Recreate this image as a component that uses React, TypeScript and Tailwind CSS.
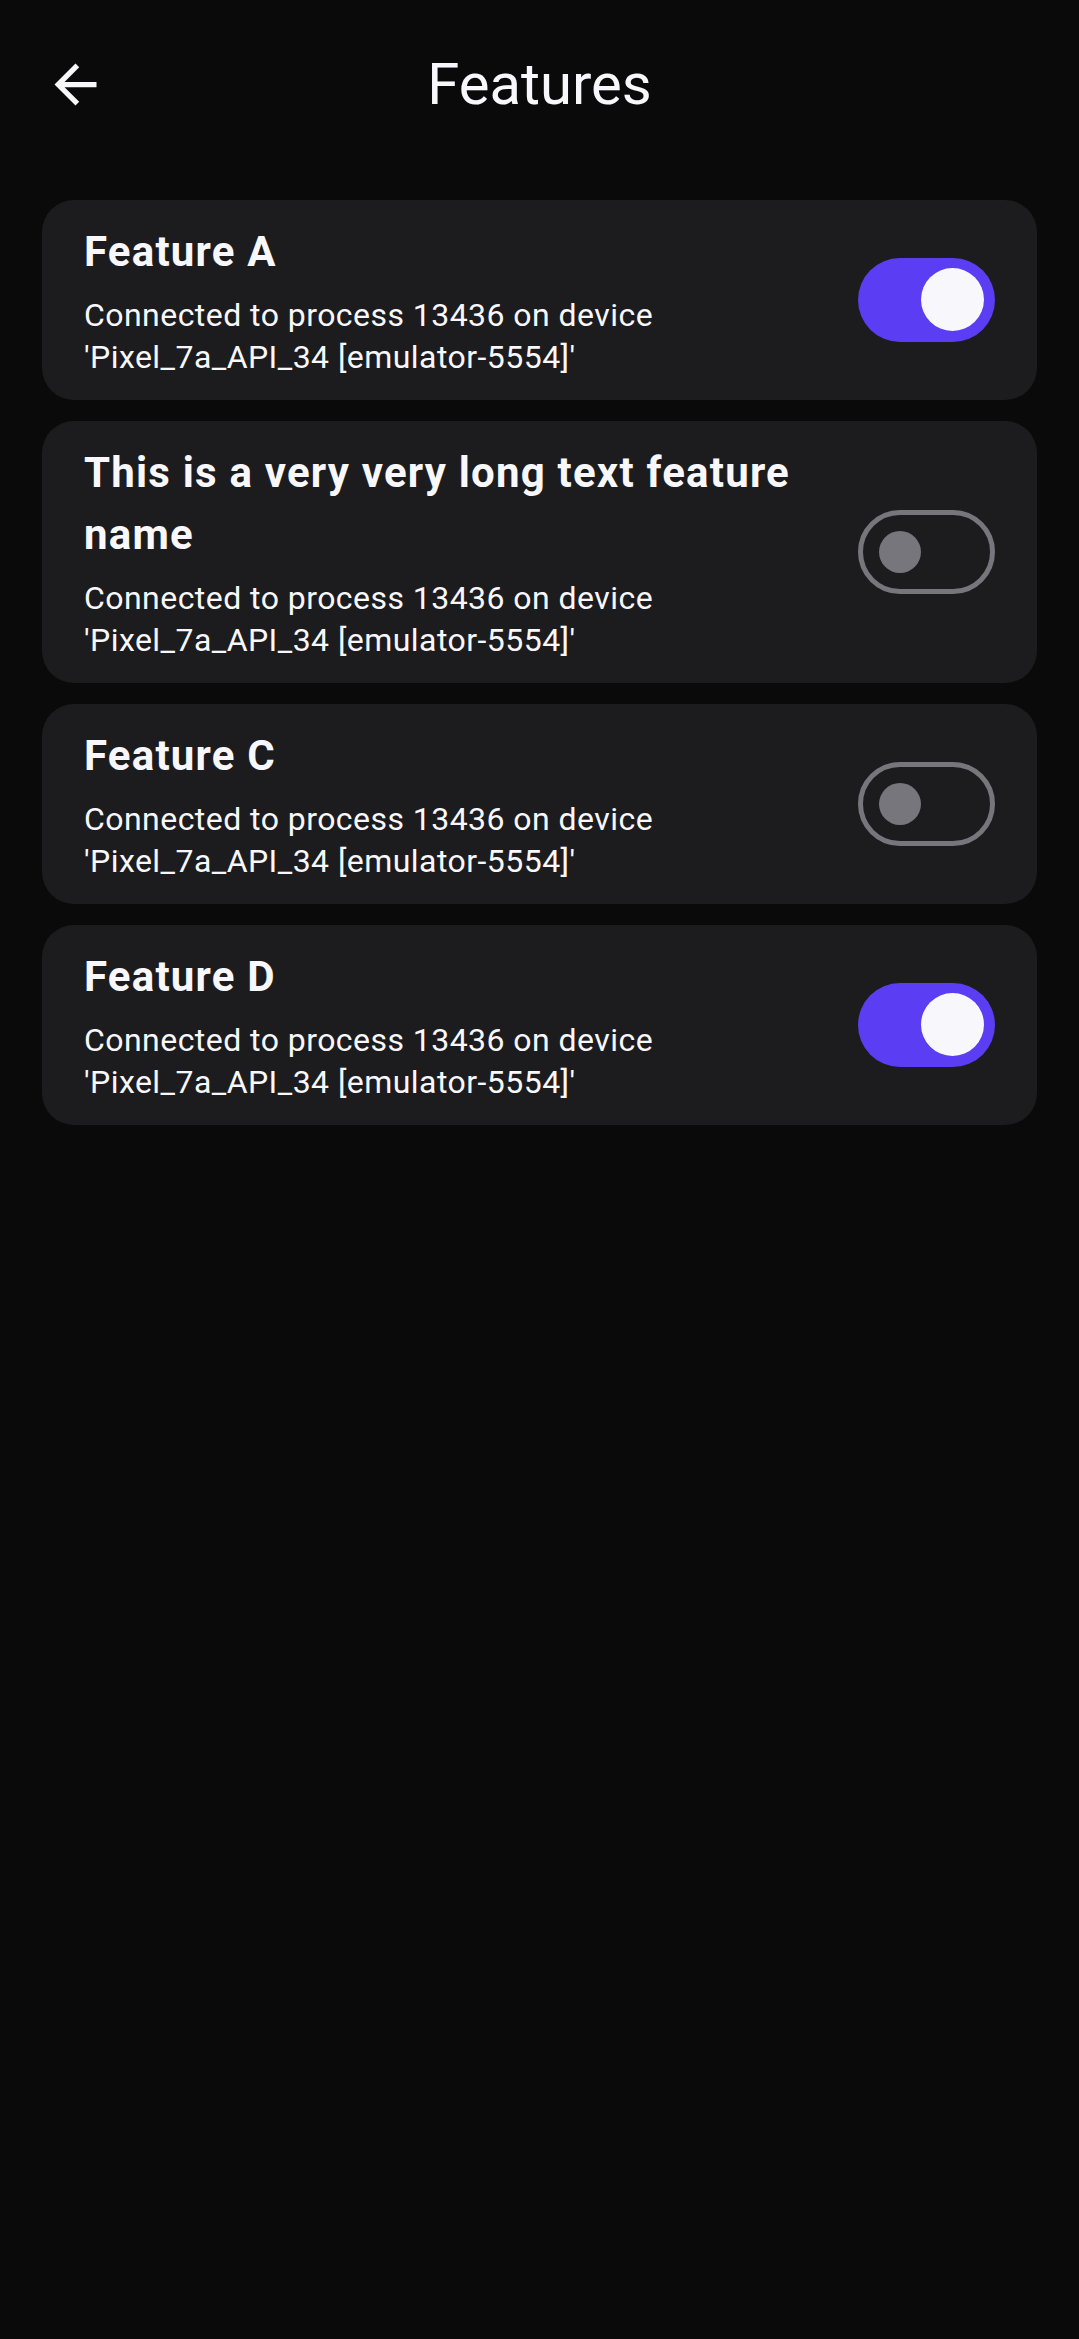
import React, { useState } from 'react';

interface Feature {
  id: string;
  name: string;
  description: string;
  enabled: boolean;
}

const initialFeatures: Feature[] = [
  {
    id: 'a',
    name: 'Feature A',
    description: "Connected to process 13436 on device 'Pixel_7a_API_34 [emulator-5554]'",
    enabled: true,
  },
  {
    id: 'b',
    name: 'This is a very very long text feature name',
    description: "Connected to process 13436 on device 'Pixel_7a_API_34 [emulator-5554]'",
    enabled: false,
  },
  {
    id: 'c',
    name: 'Feature C',
    description: "Connected to process 13436 on device 'Pixel_7a_API_34 [emulator-5554]'",
    enabled: false,
  },
  {
    id: 'd',
    name: 'Feature D',
    description: "Connected to process 13436 on device 'Pixel_7a_API_34 [emulator-5554]'",
    enabled: true,
  },
];

const ArrowBack = () => (
  <svg viewBox="0 0 24 24" className="w-[63px] h-[63px]" fill="#f8f8fc">
    <path d="M20 11H7.83l5.59-5.59L12 4l-8 8 8 8 1.41-1.41L7.83 13H20v-2z" />
  </svg>
);

// Material 3 style switch
const Switch: React.FC<{ checked: boolean; onChange: () => void }> = ({ checked, onChange }) => (
  <button
    type="button"
    role="switch"
    aria-checked={checked}
    onClick={onChange}
    className={`shrink-0 w-[137px] h-[84px] rounded-full flex items-center ${
      checked
        ? 'bg-[#5b3ef3] justify-end pr-[11px]'
        : 'border-[5px] border-[#78767d] bg-transparent justify-start pl-[16px]'
    }`}
  >
    {checked ? (
      <span className="block w-[63px] h-[63px] rounded-full bg-[#f8f8fc]" />
    ) : (
      <span className="block w-[42px] h-[42px] rounded-full bg-[#78767d]" />
    )}
  </button>
);

const FeatureCard: React.FC<{ feature: Feature; onToggle: () => void }> = ({ feature, onToggle }) => (
  <div className="flex items-center gap-[42px] rounded-[32px] bg-[#1c1c1e] px-[42px] pt-[21px] pb-[22px]">
    <div className="flex-1 min-w-0">
      <div className="text-[42px] leading-[62px] font-bold text-[#f8f8fc] tracking-[1.2px]">{feature.name}</div>
      <div className="mt-[11px] text-[32px] leading-[42px] text-[#f8f8fc] tracking-[0.45px]">
        {feature.description}
      </div>
    </div>
    <Switch checked={feature.enabled} onChange={onToggle} />
  </div>
);

export default function App() {
  const [features, setFeatures] = useState(initialFeatures);

  const toggle = (id: string) =>
    setFeatures((prev) => prev.map((f) => (f.id === id ? { ...f, enabled: !f.enabled } : f)));

  return (
    <div className="min-h-[2339px] w-full bg-[#0a0a0a] font-['Roboto','Liberation_Sans',sans-serif]">
      {/* Top bar */}
      <div className="grid h-[168px] grid-cols-[1fr_auto_1fr] items-center">
        <div className="pl-[44px]">
          <button type="button" className="flex items-center justify-center">
            <ArrowBack />
          </button>
        </div>
        <h1 className="text-[58px] leading-none font-normal text-[#f8f8fc]">Features</h1>
        <div />
      </div>

      {/* Feature list */}
      <div className="flex flex-col gap-[21px] px-[42px] pt-[32px]">
        {features.map((f) => (
          <FeatureCard key={f.id} feature={f} onToggle={() => toggle(f.id)} />
        ))}
      </div>
    </div>
  );
}
